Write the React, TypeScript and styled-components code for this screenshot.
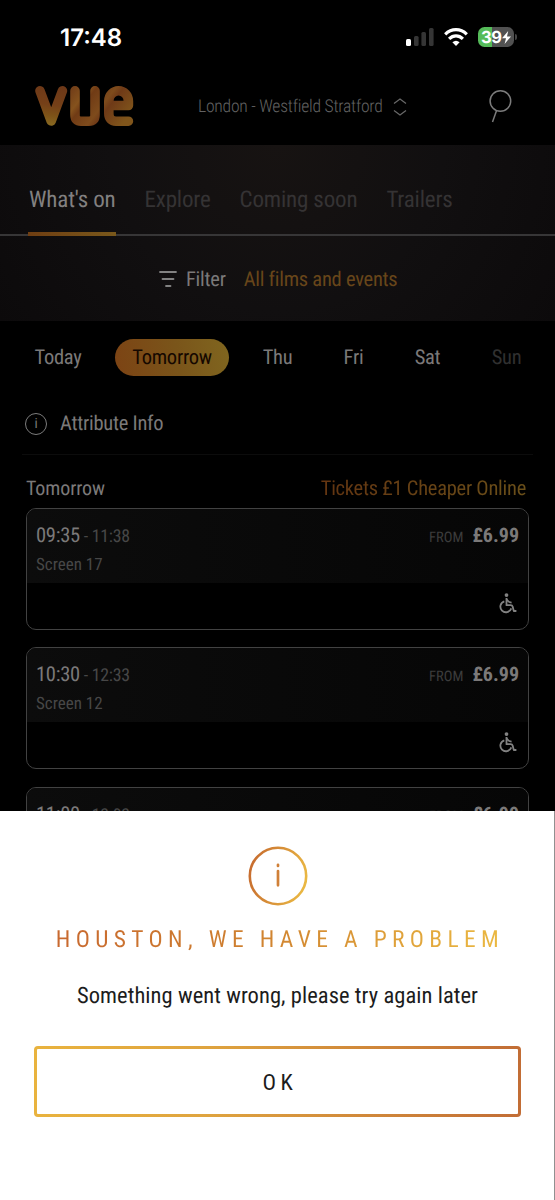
import React from 'react';
import styled, { createGlobalStyle } from 'styled-components';

const GlobalStyle = createGlobalStyle`
  * { box-sizing: border-box; }
  body { margin: 0; background: #000; }
`;

const Screen = styled.div`
  position: relative;
  width: 555px;
  height: 1200px;
  overflow: hidden;
  background: #000;
  color: #7b7979;
  font-family: 'Roboto Condensed', Roboto, 'Liberation Sans', sans-serif;
  font-stretch: 75%;
  text-rendering: geometricPrecision;
  display: flex;
  flex-direction: column;
`;

const Text = styled.span<{ $size: number; $color?: string; $spacing?: number; $weight?: number }>`
  font-size: ${(p) => p.$size}px;
  line-height: 24px;
  font-weight: ${(p) => p.$weight ?? 400};
  letter-spacing: ${(p) => p.$spacing ?? -0.26}px;
  color: ${(p) => p.$color ?? 'inherit'};
  white-space: nowrap;
`;

const StatusBar = styled.div`
  height: 74px;
  flex: none;
  display: flex;
  justify-content: space-between;
  padding: 22px 41px 0 60px;
`;

const Clock = styled.div`
  font: 600 24px/31px Inter, sans-serif;
  font-stretch: 100%;
  color: #fff;
`;

const StatusIcons = styled.div`
  display: flex;
  align-items: center;
  height: 30px;
  gap: 10px;
`;

const Battery = styled.div`
  position: relative;
  display: flex;
  align-items: center;
  width: 36px;
  height: 20px;
  padding-left: 3px;
  border-radius: 6.5px;
  background: linear-gradient(90deg, #55bb59 0 14px, #515151 14px);
  font: 700 16.5px/20px Inter, sans-serif;
  font-stretch: 100%;
  letter-spacing: -0.3px;
  color: #fff;
  &::after {
    content: '';
    position: absolute;
    left: 37px;
    top: 7px;
    width: 2px;
    height: 6px;
    border-radius: 0 2px 2px 0;
    background: #444;
  }
`;

const Header = styled.header`
  height: 71px;
  flex: none;
  display: flex;
  align-items: flex-start;
  padding-left: 34px;
`;

const LogoSlot = styled.div`
  margin-top: 10px;
  line-height: 0;
`;

const Location = styled.div`
  display: flex;
  align-items: center;
  justify-content: space-between;
  margin: 20px 0 0 63px;
  width: 209px;
  color: #626262;
  ${Text} {
    padding-top: 1px;
  }
`;

const SearchButton = styled.div`
  margin: 15px 0 0 81px;
  line-height: 0;
`;

const Hero = styled.section`
  height: 176px;
  flex: none;
  background: radial-gradient(circle 330px at 50% 0, #171312 0%, #110f10 50%, #0c0a0b 100%);
`;

const Tabs = styled.nav`
  height: 91px;
  display: flex;
  align-items: stretch;
  gap: 29px;
  padding-left: 29px;
  border-bottom: 2px solid #373637;
`;

const Tab = styled.div<{ $active?: boolean }>`
  position: relative;
  padding-top: 43px;
  color: ${(p) => (p.$active ? '#828080' : '#353334')};
  &::after {
    content: '';
    display: ${(p) => (p.$active ? 'block' : 'none')};
    position: absolute;
    left: -1px;
    right: 0;
    bottom: -2px;
    height: 4px;
    background: linear-gradient(90deg, #6f3e12, #79581b);
  }
`;

const FilterRow = styled.div`
  display: flex;
  align-items: center;
  height: 86px;
  padding-left: 159px;
  ${Text} {
    padding: 1px 0 0 9px;
  }
  ${Text} + ${Text} {
    padding-left: 18px;
  }
`;

const Dates = styled.div`
  height: 74px;
  flex: none;
  display: flex;
  align-items: center;
  padding: 0 0 1px 17px;
`;

const DatePill = styled.div<{ $width: number; $active?: boolean }>`
  width: ${(p) => p.$width}px;
  height: 37px;
  border-radius: 19px;
  display: flex;
  align-items: center;
  justify-content: center;
  padding-top: 1px;
  ${(p) =>
    p.$active &&
    'margin-left: 16px; background: linear-gradient(80deg, #7c4314, #7a551a 55%, #80661f); color: #150800;'}
`;

const InfoRow = styled.div`
  height: 60px;
  flex: none;
  display: flex;
  align-items: center;
  gap: 13px;
  margin: 0 22px;
  padding: 0 0 2px 3px;
  border-bottom: 1px solid #0c0c0c;
  ${Text} {
    padding-top: 1px;
  }
`;

const InfoBadge = styled.div`
  width: 22px;
  height: 22px;
  border: 1.5px solid #7c7c7c;
  border-radius: 50%;
  font-size: 14px;
  line-height: 20px;
  text-align: center;
`;

const Listing = styled.div`
  flex: none;
  padding: 21px 26px 0;
  display: flex;
  flex-direction: column;
`;

const ListingHead = styled.div`
  display: flex;
  justify-content: space-between;
  height: 32px;
  padding-right: 3px;
`;

const Offer = styled(Text)`
  height: 28px;
  padding-top: 1px;
  background: linear-gradient(90deg, #643511, #6a4f19);
  background-clip: text;
  -webkit-background-clip: text;
  color: transparent;
`;

const Card = styled.article`
  width: 503px;
  height: 122px;
  flex: none;
  margin-bottom: 17.4px;
  border: 1.5px solid #424242;
  border-radius: 10px;
  overflow: hidden;
  background: #000;
`;

const CardTop = styled.div`
  height: 74px;
  display: flex;
  justify-content: space-between;
  padding: 15px 9px 0 9px;
  background: linear-gradient(90deg, #0c0c0c, #060606);
`;

const Times = styled.div`
  display: flex;
  flex-direction: column;
  gap: 5px;
`;

const Line = styled.div`
  display: flex;
  align-items: baseline;
  height: 24px;
`;

const Price = styled(Line)`
  gap: 9px;
  margin-top: -1px;
`;

const Access = styled.div`
  display: flex;
  justify-content: flex-end;
  padding: 10px 11px 0 0;
`;

const Sheet = styled.section`
  position: absolute;
  left: 0;
  right: 0;
  top: 811px;
  bottom: 0;
  background: #fff;
  border-right: 1px solid #909090;
  display: flex;
  flex-direction: column;
  align-items: center;
  padding: 35px 0 0 1px;
`;

const SheetTitle = styled.h1`
  margin: 18px 0 0;
  padding-left: 5px;
  font-size: 23.5px;
  line-height: 30px;
  font-weight: 400;
  letter-spacing: 5.35px;
  white-space: nowrap;
  background: linear-gradient(90deg, #c8682f, #cf812f 45%, #ebb942);
  background-clip: text;
  -webkit-background-clip: text;
  color: transparent;
`;

const Message = styled.p`
  margin: 28px 0 0;
  font-size: 22.5px;
  line-height: 28px;
  letter-spacing: 0.07px;
  color: #1c1c1c;
  white-space: nowrap;
`;

const OkButton = styled.button`
  width: 487px;
  height: 71px;
  margin-top: 36px;
  padding: 0 0 0 5px;
  border: 3px solid transparent;
  border-radius: 4px;
  background: linear-gradient(#fff, #fff) padding-box,
    linear-gradient(90deg, #e9b33e 0%, #dfa43f 35%, #c26d35 100%) border-box;
  font: inherit;
  font-size: 22.5px;
  letter-spacing: 4.5px;
  color: #1c1c1c;
`;

const VueLogo = () => (
  <svg width="101" height="44" viewBox="34 84 101 44" fill="none">
    <defs>
      <linearGradient id="vue" x1="60" y1="84" x2="54" y2="127" gradientUnits="userSpaceOnUse">
        <stop offset="0" stopColor="#6c3718" />
        <stop offset="0.5" stopColor="#754018" />
        <stop offset="0.75" stopColor="#7d5318" />
        <stop offset="1" stopColor="#8a6c22" />
      </linearGradient>
      <linearGradient id="vueWarm" x1="72" y1="90" x2="120" y2="127" gradientUnits="userSpaceOnUse">
        <stop offset="0" stopColor="#744019" />
        <stop offset="0.2" stopColor="#85521d" />
        <stop offset="0.3" stopColor="#703b15" />
        <stop offset="0.55" stopColor="#7e4b1c" />
        <stop offset="0.65" stopColor="#6f3a17" />
        <stop offset="1" stopColor="#80551b" />
      </linearGradient>
    </defs>
    <g strokeWidth="9.6" strokeLinecap="round" strokeLinejoin="round">
      <path d="M40 90.8 51.2 121 62.4 90.8" stroke="url(#vue)" />
      <path d="M75 90.8V115Q75 121.2 81 121.2H89Q95 121.2 95 115V90.8" stroke="url(#vueWarm)" />
      <path d="M128.4 121.2H116Q108.8 121.2 108.8 113V101A9.8 10.3 0 0 1 128.4 101V105.5H113" stroke="url(#vueWarm)" />
    </g>
  </svg>
);

const SignalIcon = () => (
  <svg width="28" height="18" viewBox="0 0 28 18">
    <rect x="0" y="11" width="5" height="7" rx="1.5" fill="#fff" />
    <rect x="8" y="8" width="4.6" height="10" rx="1.5" fill="#353535" />
    <rect x="15.4" y="4" width="4.6" height="14" rx="1.5" fill="#353535" />
    <rect x="23" y="0" width="4.6" height="18" rx="1.5" fill="#353535" />
  </svg>
);

const WifiIcon = () => (
  <svg width="24" height="18" viewBox="0 0 24 18" fill="none" stroke="#fff" strokeWidth="3.2">
    <path d="M1.2 6.3Q6 1.7 12 1.7T22.8 6.3" />
    <path d="M5.1 10.9Q8.2 7.9 12 7.9T18.9 10.9" />
    <path d="M12 18 8.4 14.3Q12 11.2 15.6 14.3Z" fill="#fff" stroke="none" />
  </svg>
);

const BoltIcon = () => (
  <svg width="9" height="13" viewBox="0 0 9 13" fill="#fff">
    <path d="M6.2 0 0 7.3H4L2.6 13 9 5.4H5Z" />
  </svg>
);

const WheelchairIcon = () => (
  <svg width="18" height="21" viewBox="0 0 18 21" fill="none" stroke="#828282" strokeWidth="1.8">
    <circle cx="7.5" cy="2.1" r="1.9" fill="#828282" stroke="none" />
    <path d="M7.5 5V12.2H11.6Q13.3 12.2 13.7 13.8L14.8 18H17.4" strokeLinejoin="round" />
    <path d="M7.5 6.2Q9 9.3 12.6 9.6" />
    <path d="M5.3 8.3A5.6 5.6 0 1 0 12.3 15.4" />
  </svg>
);

const SHOWINGS = [
  { start: '09:35', end: '11:38', room: 'Screen 17' },
  { start: '10:30', end: '12:33', room: 'Screen 12' },
  { start: '11:00', end: '13:03', room: 'Screen 9' },
];

const DATES = [
  { label: 'Today', width: 82 },
  { label: 'Tomorrow', width: 114, active: true },
  { label: 'Thu', width: 97 },
  { label: 'Fri', width: 55 },
  { label: 'Sat', width: 93 },
  { label: 'Sun', width: 65, color: '#303030' },
];

export default function App() {
  return (
    <Screen>
      <GlobalStyle />
      <StatusBar>
        <Clock>17:48</Clock>
        <StatusIcons>
          <SignalIcon />
          <WifiIcon />
          <Battery>39<BoltIcon /></Battery>
        </StatusIcons>
      </StatusBar>
      <Header>
        <LogoSlot><VueLogo /></LogoSlot>
        <Location>
          <Text $size={17.6} $weight={330} $spacing={-0.24}>London - Westfield Stratford</Text>
          <svg width="14" height="18" viewBox="0 0 14 18" fill="none" stroke="#686868" strokeWidth="1.2">
            <path d="M1 5.5 7 1 13 5.5M1 12.5 7 17 13 12.5" />
          </svg>
        </Location>
        <SearchButton>
          <svg width="24" height="34" viewBox="0 0 24 34" fill="none" stroke="#7c7c7c" strokeWidth="1.5">
            <circle cx="12.4" cy="12" r="10.3" />
            <path d="M8.5 21.8 4.5 33" />
          </svg>
        </SearchButton>
      </Header>
      <Hero>
        <Tabs>
          {["What's on", 'Explore', 'Coming soon', 'Trailers'].map((name, i) => (
            <Tab key={name} $active={i === 0}>
              <Text $size={23} $spacing={-0.17}>{name}</Text>
            </Tab>
          ))}
        </Tabs>
        <FilterRow>
          <svg width="18" height="18" viewBox="0 0 18 18" stroke="#828282" strokeWidth="1.8" strokeLinecap="round">
            <path d="M1 2H17M3.5 9H14.5M7 16H11.5" />
          </svg>
          <Text $size={20.5}>Filter</Text>
          <Text $size={20.5} $color="#68461a">All films and events</Text>
        </FilterRow>
      </Hero>
      <Dates>
        {DATES.map((d) => (
          <DatePill key={d.label} $width={d.width} $active={d.active}>
            <Text $size={20.5} $color={d.color}>{d.label}</Text>
          </DatePill>
        ))}
      </Dates>
      <InfoRow>
        <InfoBadge>i</InfoBadge>
        <Text $size={20.5}>Attribute Info</Text>
      </InfoRow>
      <Listing>
        <ListingHead>
          <Text $size={20} $spacing={-0.1}>Tomorrow</Text>
          <Offer $size={20.5} $color="transparent">Tickets £1 Cheaper Online</Offer>
        </ListingHead>
        {SHOWINGS.map((s) => (
          <Card key={s.start}>
            <CardTop>
              <Times>
                <Line>
                  <Text $size={20.5}>{s.start}</Text>
                  <Text $size={17.8} $color="#474747">&nbsp;- {s.end}</Text>
                </Line>
                <Text $size={17} $spacing={0} $color="#474747">{s.room}</Text>
              </Times>
              <Price>
                <Text $size={14.5} $spacing={0} $color="#3c3c3c">FROM</Text>
                <Text $size={20} $weight={700} $spacing={0}>£6.99</Text>
              </Price>
            </CardTop>
            <Access><WheelchairIcon /></Access>
          </Card>
        ))}
      </Listing>
      <Sheet>
        <svg width="60" height="60" viewBox="0 0 60 60" fill="none">
          <defs>
            <linearGradient id="ring" x1="0" y1="20" x2="60" y2="35" gradientUnits="userSpaceOnUse">
              <stop offset="0" stopColor="#c66a2e" />
              <stop offset="1" stopColor="#ebba43" />
            </linearGradient>
          </defs>
          <circle cx="30" cy="30" r="28.2" stroke="url(#ring)" strokeWidth="2.6" />
          <path d="M30 25V39.3M30 18.8V20" stroke="#d08038" strokeWidth="2.7" strokeLinecap="round" />
        </svg>
        <SheetTitle>HOUSTON, WE HAVE A PROBLEM</SheetTitle>
        <Message>Something went wrong, please try again later</Message>
        <OkButton>OK</OkButton>
      </Sheet>
    </Screen>
  );
}
